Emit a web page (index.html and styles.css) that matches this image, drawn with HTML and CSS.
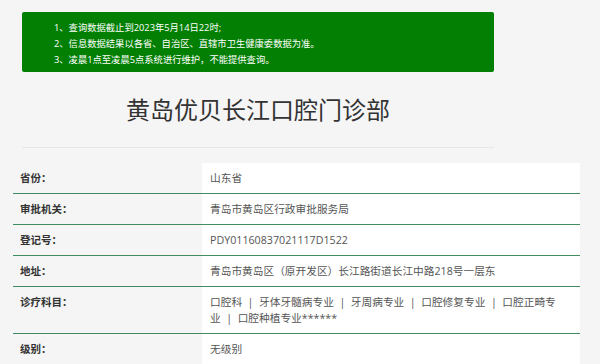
FILE: index.html
```html
<!DOCTYPE html>
<html lang="zh-CN">
<head>
<meta charset="utf-8">
<title>黄岛优贝长江口腔门诊部</title>
<link rel="stylesheet" href="styles.css">
</head>
<body>
<div class="wrap">
  <div class="notice">
    <p>1、查询数据截止到2023年5月14日22时;</p>
    <p>2、信息数据结果以各省、自治区、直辖市卫生健康委数据为准。</p>
    <p>3、凌晨1点至凌晨5点系统进行维护，不能提供查询。</p>
  </div>
  <h1 class="title">黄岛优贝长江口腔门诊部</h1>
  <hr class="rule">
</div>
<div class="info">
  <div class="row"><div class="label">省份：</div><div class="value">山东省</div></div>
  <div class="row"><div class="label">审批机关：</div><div class="value">青岛市黄岛区行政审批服务局</div></div>
  <div class="row"><div class="label">登记号：</div><div class="value">PDY01160837021117D1522</div></div>
  <div class="row"><div class="label">地址：</div><div class="value">青岛市黄岛区（原开发区）长江路街道长江中路218号一层东</div></div>
  <div class="row"><div class="label">诊疗科目：</div><div class="value">口腔科 &nbsp;|&nbsp; 牙体牙髓病专业 &nbsp;|&nbsp; 牙周病专业 &nbsp;|&nbsp; 口腔修复专业 &nbsp;|&nbsp; 口腔正畸专业 &nbsp;|&nbsp; 口腔种植专业******</div></div>
  <div class="row last"><div class="label">级别：</div><div class="value">无级别</div></div>
</div>
</body>
</html>
```
FILE: styles.css
```css
html, body {
  margin: 0;
  padding: 0;
  background: #f5f5f5;
  font-family: "Open Sans", "Noto Sans CJK SC", sans-serif;
  color: #333;
}
.wrap {
  width: 472px;
  margin-left: 22px;
  padding-top: 12px;
}
.notice {
  background: #038003;
  color: #fff;
  border-radius: 2px;
  padding: 8px 0 4px 32px;
  font-size: 9.3px;
  line-height: 16px;
}
.notice p {
  margin: 0;
}
.title {
  margin: 0;
  padding-top: 23px;
  font-size: 24px;
  line-height: 30px;
  font-weight: normal;
  text-align: center;
  color: #333;
}
.rule {
  border: 0;
  border-top: 1px solid #e6e6e6;
  margin: 22px 0 0 0;
}
.info {
  margin: 15px 0 0 13px;
  width: 567px;
}
.row {
  display: grid;
  grid-template-columns: 189px 378px;
  border-bottom: 1px solid #3f8d60;
}
.row.last {
  border-bottom: 0;
}
.label {
  padding: 7px 0 7px 7px;
  font-size: 10.5px;
  line-height: 16px;
  font-weight: bold;
  color: #333;
}
.value {
  background: #fff;
  padding: 7px 24px 7px 8px;
  font-size: 10.7px;
  line-height: 16px;
  color: #555;
}
```
